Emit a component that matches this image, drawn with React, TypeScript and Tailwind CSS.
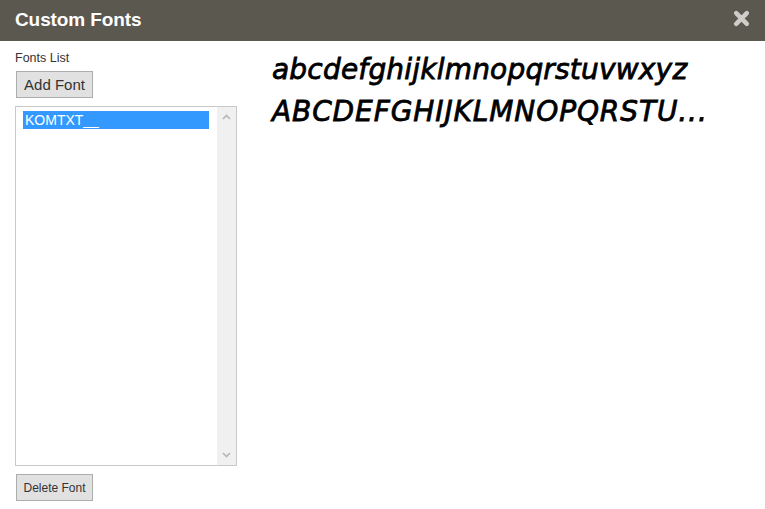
export default function App() {
  return (
    <div className="w-[765px] h-[509px] bg-white overflow-hidden" style={{ fontFamily: '"Liberation Sans", Arial, sans-serif' }}>
      <div className="h-[41px] bg-[#5b5850] flex items-center justify-between pl-[15px] pr-[15px]">
        <h1 className="text-[19px] font-bold text-white tracking-[-0.1px]">Custom Fonts</h1>
        <svg width="17" height="17" viewBox="0 0 16 16" className="mt-[-4px]">
          <path d="M3 3 L13 13 M13 3 L3 13" stroke="#cfcdc9" strokeWidth="4.2" strokeLinecap="round" />
        </svg>
      </div>
      <div className="flex">
        <div className="pl-[15px] pt-[10px] w-[262px] shrink-0">
          <div className="text-[12.5px] text-[#333] leading-[14px]">Fonts List</div>
          <button className="mt-[6px] ml-[1px] h-[27px] w-[77px] bg-[#e1e1e1] border border-[#adadad] text-[15px] text-[#333] leading-none">
            Add Font
          </button>
          <div className="mt-[8px] w-[222px] h-[360px] border border-[#c9c9c9] flex">
            <div className="flex-1 pt-[4px] pl-[7px] pr-[8px]">
              <div className="h-[18px] bg-[#3399ff] text-white text-[14px] leading-[18px] pl-[2px]">KOMTXT__</div>
            </div>
            <div className="w-[19px] bg-[#f0f0f0] flex flex-col justify-between items-center py-[7px]">
              <svg width="9" height="6" viewBox="0 0 9 6">
                <path d="M1 5 L4.5 1.5 L8 5" stroke="#b5b5b5" strokeWidth="1.6" fill="none" />
              </svg>
              <svg width="9" height="6" viewBox="0 0 9 6">
                <path d="M1 1 L4.5 4.5 L8 1" stroke="#b5b5b5" strokeWidth="1.6" fill="none" />
              </svg>
            </div>
          </div>
          <button className="mt-[8px] ml-[1px] h-[27px] w-[77px] bg-[#e1e1e1] border border-[#adadad] text-[12px] text-[#333] leading-none">
            Delete Font
          </button>
        </div>
        <div className="pt-[8px] pl-[10px] text-black italic [-webkit-text-stroke:0.8px_black]" style={{ fontFamily: '"DejaVu Sans", sans-serif' }}>
          <div className="text-[28px] leading-[42px] tracking-[0.2px]">abcdefghijklmnopqrstuvwxyz</div>
          <div className="text-[28px] leading-[42px] tracking-[0.9px]">ABCDEFGHIJKLMNOPQRSTU...</div>
        </div>
      </div>
    </div>
  );
}
